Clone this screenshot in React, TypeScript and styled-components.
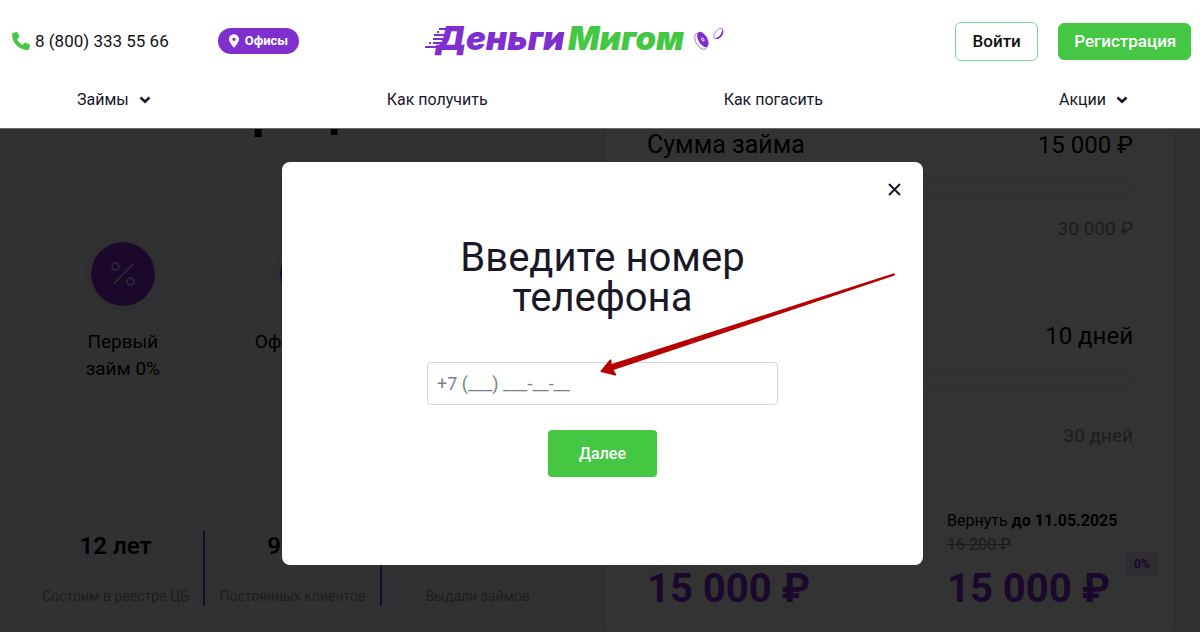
import React from 'react';
import styled, { createGlobalStyle, css } from 'styled-components';

const purple = '#802fcf';
const green = '#45c743';
const ink = '#191829';

const GlobalStyle = createGlobalStyle`
  *, *::before, *::after { box-sizing: border-box; }
  html, body { margin: 0; }
  body {
    font-family: Roboto, "Liberation Sans", sans-serif;
    font-size: 16px;
    line-height: 20px;
    color: ${ink};
    background: #fff;
  }
  button, input { font: inherit; }
  h1, h2, p, ul, dl, dd { margin: 0; padding: 0; }
`;

const Page = styled.div`
  display: flex;
  flex-direction: column;
  height: 100vh;
  overflow: hidden;
`;

const Header = styled.header`
  flex: none;
  background: #fff;
  border-bottom: 1px solid #6a6a6c;
`;

const TopBar = styled.div`
  display: grid;
  grid-template-columns: 35% 45% 20%;
  align-items: center;
  height: 82px;
  padding: 0 9px 0 12px;
`;

const Contacts = styled.div`
  display: flex;
  align-items: center;
  gap: 49px;
`;

const PhoneLink = styled.a`
  display: flex;
  align-items: center;
  gap: 5px;
  color: #111;
  font-size: 17px;
  white-space: nowrap;
  text-decoration: none;
`;

const OfficesLink = styled.a`
  display: flex;
  align-items: center;
  gap: 6px;
  height: 26px;
  padding: 0 11px;
  border-radius: 13px;
  background: ${purple};
  color: #fff;
  font-size: 13px;
  font-weight: 700;
  text-decoration: none;
`;

const LogoLink = styled.a`
  display: block;
  height: 40px;
`;

const LogoImage = styled.svg`
  display: block;
  overflow: visible;
`;

const Actions = styled.div`
  display: flex;
  align-items: center;
  justify-content: flex-end;
  gap: 20px;
`;

const HeaderButton = styled.button<{ $filled?: boolean }>`
  min-width: 83px;
  padding: 8px 15px;
  border: 1px solid #7fd88a;
  border-radius: 6px;
  background: #fff;
  color: #111;
  font-size: 17px;
  font-weight: 500;
  line-height: 21px;
  ${({ $filled }) => $filled && css`
    border-color: ${green};
    background: ${green};
    color: #fff;
    line-height: 19px;
  `}
`;

const Nav = styled.nav`
  display: flex;
  align-items: center;
  justify-content: space-between;
  height: 46px;
  padding: 0 72px 11px 77px;
`;

const NavLink = styled.a`
  display: flex;
  align-items: center;
  gap: 10px;
  color: ${ink};
  font-size: 16px;
  text-decoration: none;
`;

const Stage = styled.main`
  position: relative;
  flex: 1;
  min-height: 0;
  overflow: hidden;
  background: #f0f3fa;
`;

const Backdrop = styled.div`
  position: absolute;
  inset: 0;
  display: flex;
  align-items: flex-start;
  justify-content: center;
  padding: 33px 0 0 5px;
  background: rgba(0, 0, 0, 0.8);
`;

const Content = styled.div`
  display: grid;
  grid-template-columns: 1fr 1fr;
  height: 100%;
  padding: 0 26px 0 28px;
`;

const Promo = styled.section`
  display: flex;
  flex-direction: column;
`;

const PromoTitle = styled.h1`
  margin-top: -50px;
  padding-left: 102px;
  color: #000;
  font-size: 50px;
  font-weight: 700;
  line-height: 62px;
`;

const Features = styled.ul`
  display: grid;
  grid-template-columns: repeat(3, 1fr);
  margin-top: 96px;
  padding-right: 4px;
  list-style: none;
`;

const Feature = styled.li`
  display: flex;
  flex-direction: column;
  align-items: center;
  gap: 17px;
  color: #000;
  font-size: 19px;
  line-height: 27px;
  text-align: center;
`;

const FeatureIcon = styled.span`
  display: flex;
  align-items: center;
  justify-content: center;
  width: 74px;
  height: 74px;
  border: 5px solid #f3e6f5;
  border-radius: 50%;
  background: ${purple};
  background-clip: padding-box;
`;

const Stats = styled.dl`
  display: grid;
  grid-template-columns: 13fr 13fr 14fr;
  margin-top: 149px;
  padding-right: 28px;
`;

const Stat = styled.div`
  display: flex;
  flex-direction: column-reverse;
  justify-content: space-between;
  height: 75px;
  text-align: center;
  border-right: 2px solid ${purple};
  &:last-child { border-right: 0; }
`;

const StatLabel = styled.dt`
  color: #96968c;
  font-size: 14px;
  white-space: nowrap;
`;

const StatValue = styled.dd`
  color: #000;
  font-size: 24px;
  font-weight: 600;
  line-height: 30px;
`;

const Calculator = styled.section`
  display: flex;
  flex-direction: column;
  margin-left: 5px;
  padding: 0 41px;
  background: #fff;
  box-shadow: 0 0 8px #e4e4e8;
`;

const Amount = styled.div`
  display: flex;
  justify-content: space-between;
  color: #000;
  font-size: 25px;
  line-height: 32px;
`;

const AmountValue = styled.span`
  font-size: 24px;
`;

const Track = styled.div<{ $gap: number }>`
  height: 13px;
  margin: 21px 0 ${({ $gap }) => $gap}px;
  border: 1px solid #e6e6e6;
  border-radius: 5px;
`;

const Limit = styled.div`
  color: #96968c;
  font-size: 19px;
  line-height: 30px;
  text-align: right;
`;

const Term = styled.div`
  margin-top: 76px;
`;

const Totals = styled.div`
  display: grid;
  grid-template-columns: 300px 1fr;
  align-items: end;
  margin-top: 58px;
`;

const Total = styled.div`
  position: relative;
  color: #000;
  font-size: 16px;
  line-height: 24px;
`;

const OldPrice = styled.s`
  color: #88888a;
`;

const Price = styled.div`
  color: ${purple};
  font-size: 40px;
  font-weight: 700;
  line-height: 64px;
`;

const Discount = styled.span`
  position: absolute;
  top: 43px;
  right: -25px;
  width: 32px;
  border-radius: 3px;
  background: #e9d9f7;
  color: ${purple};
  font-size: 12px;
  font-weight: 700;
  text-align: center;
`;

const Dialog = styled.section`
  display: flex;
  flex-direction: column;
  width: 641px;
  min-height: 403px;
  padding: 17px 18px;
  border-radius: 8px;
  background: #fff;
`;

const CloseButton = styled.button`
  display: flex;
  align-self: flex-end;
  padding: 0;
  border: 0;
  background: none;
  color: ${ink};
`;

const PhoneForm = styled.form`
  display: flex;
  flex-direction: column;
  align-items: center;
  width: 351px;
  margin: 39px auto 0;
`;

const DialogTitle = styled.h2`
  margin-bottom: 44px;
  font-size: 40px;
  font-weight: 400;
  line-height: 40px;
  text-align: center;
`;

const PhoneInput = styled.input`
  width: 100%;
  height: 43px;
  padding: 0 9px;
  border: 1px solid #d3d6dc;
  border-radius: 4px;
  background: #fff;
  color: ${ink};
  font-size: 18px;
  &::placeholder { color: #7b8087; opacity: 1; }
`;

const SubmitButton = styled.button`
  width: 109px;
  height: 47px;
  margin-top: 25px;
  border: 0;
  border-radius: 4px;
  background: ${green};
  color: #fff;
  font-size: 16px;
  font-weight: 500;
`;

const Pointer = styled.svg`
  position: absolute;
  top: 142px;
  left: calc(50% - 2px);
  pointer-events: none;
`;

const Chevron = () => (
  <svg width="12" height="8" viewBox="0 0 12 8" aria-hidden="true">
    <path d="M1.5 1.5 6 5.7 10.5 1.5" fill="none" stroke={ink} strokeWidth="2.6" />
  </svg>
);

const Logo = () => (
  <LogoImage width="302" height="40" viewBox="0 0 302 40" role="img" aria-label="ДеньгиМигом">
    <g fontFamily="Inter, sans-serif" fontSize="33" fontWeight="900" fontStyle="italic">
      <text x="11" y="29" fill={purple}>Деньги</text>
      <text x="143" y="29" fill={green}>Мигом</text>
    </g>
    <g stroke={purple} strokeWidth="2">
      <path d="M14 8h10M12 11h2M9 14h12M8 18h10M4 22h2M8 22h10M0 26h14" />
    </g>
    <g transform="rotate(-30 277 19)" fill="none" stroke={purple}>
      <ellipse cx="275.500" cy="19.500" rx="5" ry="9" strokeWidth="0.600" />
      <ellipse cx="278" cy="19" rx="4.500" ry="8.500" fill={purple} stroke="none" />
      <ellipse cx="278" cy="19" rx="1" ry="1.800" stroke="#fff" strokeWidth="0.800" />
    </g>
    <g transform="rotate(38 294 13)">
      <ellipse cx="293" cy="13" rx="3" ry="6" fill="none" stroke={purple} strokeWidth="0.600" />
      <path d="M293 7c6 0 6 12 0 12 3.500-2 3.500-10 0-12z" fill={purple} />
    </g>
  </LogoImage>
);

const stats = [
  { value: '12 лет', label: 'Состоим в реестре ЦБ' },
  { value: '98 %', label: 'Постоянных клиентов' },
  { value: '5 млн', label: 'Выдали займов' },
];

const PercentIcon = () => (
  <svg width="24" height="24" viewBox="0 0 24 24" fill="none" stroke="#e6dcf0" strokeWidth="1.5" aria-hidden="true">
    <circle cx="4.500" cy="4.500" r="3.500" />
    <circle cx="19.500" cy="19.500" r="3.500" />
    <path d="M22 2 2.500 22" />
  </svg>
);

export default function App() {
  return (
    <Page>
      <GlobalStyle />
      <Header>
        <TopBar>
          <Contacts>
            <PhoneLink href="tel:88003335566">
              <svg width="18" height="18" viewBox="0 0 512 512" fill={green} aria-hidden="true">
                <path d="M165 25c-8-19-29-29-48-23L29 26C12 31 0 47 0 64c0 247 201 448 448 448 18 0 33-12 38-29l24-88c5-20-5-41-23-49l-96-40c-16-7-35-2-47 12l-40 49c-70-33-127-90-160-160l49-40c14-12 19-30 12-47z" />
              </svg>
              8 (800) 333 55 66
            </PhoneLink>
            <OfficesLink href="#offices">
              <svg width="10" height="14" viewBox="0 0 384 512" fill="#fff" aria-hidden="true">
                <path d="M216 499C267 435 384 279 384 192 384 86 298 0 192 0S0 86 0 192c0 87 117 243 168 307 12 16 36 16 48 0zM192 128a64 64 0 1 1 0 128 64 64 0 0 1 0-128z" />
              </svg>
              Офисы
            </OfficesLink>
          </Contacts>
          <LogoLink href="#home"><Logo /></LogoLink>
          <Actions>
            <HeaderButton type="button">Войти</HeaderButton>
            <HeaderButton type="button" $filled>Регистрация</HeaderButton>
          </Actions>
        </TopBar>
        <Nav>
          <NavLink href="#loans">Займы <Chevron /></NavLink>
          <NavLink href="#get">Как получить</NavLink>
          <NavLink href="#repay">Как погасить</NavLink>
          <NavLink href="#promo">Акции <Chevron /></NavLink>
        </Nav>
      </Header>
      <Stage>
        <Content>
          <Promo>
            <PromoTitle>без процентов</PromoTitle>
            <Features>
              <Feature>
                <FeatureIcon><PercentIcon /></FeatureIcon>
                <span>Первый<br />займ 0%</span>
              </Feature>
              <Feature>
                <FeatureIcon />
                <span>Оформление</span>
              </Feature>
            </Features>
            <Stats>
              {stats.map(({ value, label }) => (
                <Stat key={label}>
                  <StatLabel>{label}</StatLabel>
                  <StatValue>{value}</StatValue>
                </Stat>
              ))}
            </Stats>
          </Promo>
          <Calculator>
            <Amount><span>Сумма займа</span><AmountValue>15 000 ₽</AmountValue></Amount>
            <Track $gap={19} />
            <Limit>30 000 ₽</Limit>
            <Term>
              <Amount><span>Срок</span><AmountValue>10 дней</AmountValue></Amount>
              <Track $gap={35} />
              <Limit>30 дней</Limit>
            </Term>
            <Totals>
              <Total><Price>15 000 ₽</Price></Total>
              <Total>
                <div>Вернуть <b>до 11.05.2025</b></div>
                <OldPrice>16 200 ₽</OldPrice>
                <Price>15 000 ₽</Price>
                <Discount>0%</Discount>
              </Total>
            </Totals>
          </Calculator>
        </Content>
        <Backdrop>
          <Dialog role="dialog" aria-modal="true" aria-labelledby="phone-title">
            <CloseButton type="button" aria-label="Закрыть">
              <svg width="20" height="20" viewBox="0 0 20 20" stroke="currentColor" strokeWidth="2" aria-hidden="true">
                <path d="m4 5 11 11m0-11-11 11" />
              </svg>
            </CloseButton>
            <PhoneForm>
              <DialogTitle id="phone-title">Введите номер телефона</DialogTitle>
              <PhoneInput type="tel" placeholder="+7 (___) ___-__-__" aria-labelledby="phone-title" />
              <SubmitButton type="button">Далее</SubmitButton>
            </PhoneForm>
          </Dialog>
          <Pointer width="300" height="108" viewBox="0 0 300 108" aria-hidden="true">
            <path
              d="M2.500 100 12 88.500q1.500-.5 1.500 1v3.500L296 2.200q1.500.5.5 2.300L15.500 99l2.500 4q.5 1.500-1 1.500L3 101q-1 0-.5-1z"
              fill="#b80000"
            />
          </Pointer>
        </Backdrop>
      </Stage>
    </Page>
  );
}
